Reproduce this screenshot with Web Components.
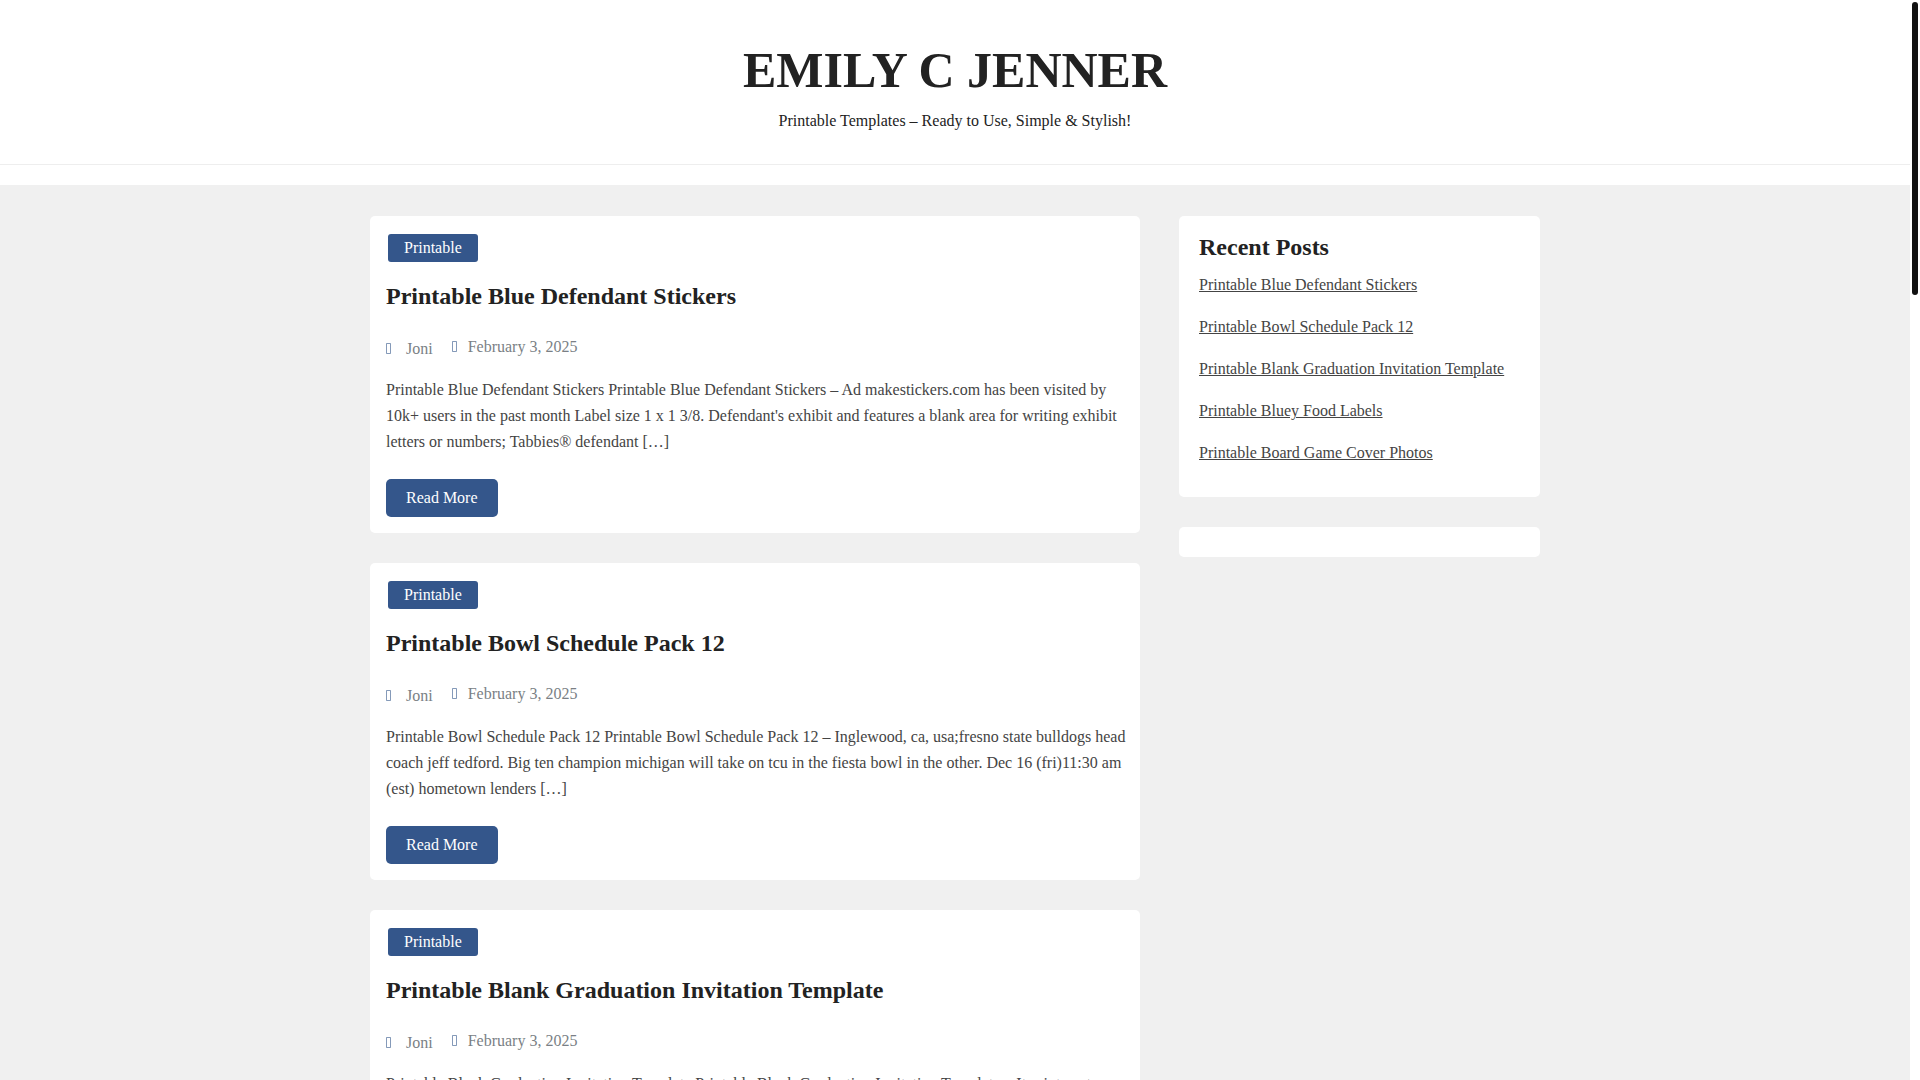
<!DOCTYPE html>
<html lang="en">
<head>
<meta charset="utf-8">
<meta name="viewport" content="width=device-width, initial-scale=1">
<title>EMILY C JENNER</title>
<style>
  html, body {
    margin: 0;
    height: 100%;
  }
  body {
    font-family: "Liberation Serif", "Times New Roman", serif;
    font-size: 16px;
    line-height: 26px;
    color: #444;
    background: #fff;
    --ink: #222;
    --brand: #34568b;
    --muted: #7a7f85;
    --page: #f0f0f0;
  }
</style>
</head>
<body>

<blog-shell>
  <site-header name="EMILY C JENNER" tagline="Printable Templates – Ready to Use, Simple &amp; Stylish!"></site-header>

  <blog-layout>
    <post-card category="Printable" heading="Printable Blue Defendant Stickers" author="Joni" date="February 3, 2025">
      Printable Blue Defendant Stickers Printable Blue Defendant Stickers – Ad makestickers.com has been visited by 10k+ users in the past month Label size 1 x 1 3/8. Defendant's exhibit and features a blank area for writing exhibit letters or numbers; Tabbies® defendant […]
    </post-card>
    <post-card category="Printable" heading="Printable Bowl Schedule Pack 12" author="Joni" date="February 3, 2025">
      Printable Bowl Schedule Pack 12 Printable Bowl Schedule Pack 12 – Inglewood, ca, usa;fresno state bulldogs head coach jeff tedford. Big ten champion michigan will take on tcu in the fiesta bowl in the other. Dec 16 (fri)11:30 am (est) hometown lenders […]
    </post-card>
    <post-card category="Printable" heading="Printable Blank Graduation Invitation Template" author="Joni" date="February 3, 2025">
      Printable Blank Graduation Invitation Template Printable Blank Graduation Invitation Template – It prints out
    </post-card>

    <side-widget slot="sidebar" heading="Recent Posts">
      <recent-link>Printable Blue Defendant Stickers</recent-link>
      <recent-link>Printable Bowl Schedule Pack 12</recent-link>
      <recent-link>Printable Blank Graduation Invitation Template</recent-link>
      <recent-link>Printable Bluey Food Labels</recent-link>
      <recent-link>Printable Board Game Cover Photos</recent-link>
    </side-widget>
    <side-widget slot="sidebar"></side-widget>
  </blog-layout>
</blog-shell>

<script>
class BlogShell extends HTMLElement {
  constructor() {
    super();
    this.attachShadow({ mode: 'open' });
    this.shadowRoot.innerHTML = `
      <style>
        :host {
          display: flex;
          height: 100vh;
          overflow: hidden;
        }
        .scroller {
          flex: 1;
          min-width: 0;
          overflow-y: auto;
          scrollbar-width: none;
          background: var(--page);
        }
        .track {
          width: 6px;
          padding: 2px;
          background: #fff;
        }
        .thumb {
          height: 293px;
          border-radius: 3px;
          background: #111;
        }
      </style>
      <div class="scroller"><slot></slot></div>
      <div class="track" aria-hidden="true"><div class="thumb"></div></div>
    `;
  }
}

class SiteHeader extends HTMLElement {
  constructor() {
    super();
    this.attachShadow({ mode: 'open' });
  }

  connectedCallback() {
    this.shadowRoot.innerHTML = `
      <style>
        :host {
          display: block;
          background: #fff;
          color: var(--ink);
          text-align: center;
        }
        header {
          padding: 40px 16px 30px;
          border-bottom: 1px solid #eee;
        }
        h1 {
          margin: 0 0 8px;
          font-size: 50px;
          line-height: 60px;
        }
        h1 a {
          color: inherit;
          text-decoration: none;
        }
        p {
          margin: 0;
        }
        nav {
          height: 20px;
        }
      </style>
      <header>
        <h1><a href="#">${this.getAttribute('name')}</a></h1>
        <p>${this.getAttribute('tagline').replace('&', '&amp;')}</p>
      </header>
      <nav></nav>
    `;
  }
}

class BlogLayout extends HTMLElement {
  constructor() {
    super();
    this.attachShadow({ mode: 'open' });
    this.shadowRoot.innerHTML = `
      <style>
        :host {
          display: block;
          padding: 31px 16px;
        }
        .container {
          display: grid;
          grid-template-columns: minmax(0, 770fr) minmax(0, 361fr);
          gap: 39px;
          max-width: 1170px;
          margin: 0 auto;
        }
        main, aside {
          display: flex;
          flex-direction: column;
          gap: 30px;
        }
        @media (max-width: 800px) {
          .container { grid-template-columns: minmax(0, 1fr); }
        }
      </style>
      <div class="container">
        <main><slot></slot></main>
        <aside><slot name="sidebar"></slot></aside>
      </div>
    `;
  }
}

class PostCard extends HTMLElement {
  constructor() {
    super();
    this.attachShadow({ mode: 'open' });
  }

  connectedCallback() {
    const category = this.getAttribute('category');
    const heading = this.getAttribute('heading');
    const author = this.getAttribute('author');
    const date = this.getAttribute('date');

    this.shadowRoot.innerHTML = `
      <style>
        :host {
          display: block;
          padding: 16px 8px 16px 16px;
          border-radius: 5px;
          background: #fff;
        }
        a {
          color: inherit;
          text-decoration: none;
        }
        .category {
          display: block;
          width: fit-content;
          margin: 2px;
          padding: 0 16px;
          border-radius: 3px;
          line-height: 28px;
          background: var(--brand);
          color: #fff;
        }
        h2 {
          margin: 17px 0;
          font-size: 24px;
          line-height: 34px;
          color: var(--ink);
        }
        .meta {
          display: flex;
          align-items: flex-start;
          gap: 19px;
          padding: 4px 0 13px;
          color: var(--muted);
        }
        .meta span {
          display: flex;
          align-items: center;
        }
        .author {
          gap: 15px;
          line-height: 30px;
        }
        .date {
          gap: 11px;
        }
        svg {
          width: 5px;
          height: 12px;
          fill: none;
          stroke: var(--brand);
          stroke-opacity: 0.6;
        }
        p {
          margin: 0 0 24px;
        }
        .more {
          display: block;
          width: fit-content;
          padding: 6px 20px;
          border-radius: 5px;
          background: var(--brand);
          color: #fff;
        }
      </style>
      <article>
        <a class="category" href="#">${category}</a>
        <h2><a href="#">${heading}</a></h2>
        <div class="meta">
          <span class="author"><svg viewBox="0 0 5 12" aria-hidden="true"><path d="M.5 .5h4v10h-4z"/></svg><a href="#">${author}</a></span>
          <span class="date"><svg viewBox="0 0 5 12" aria-hidden="true"><path d="M.5 .5h4v10h-4z"/></svg><time>${date}</time></span>
        </div>
        <p><slot></slot></p>
        <a class="more" href="#">Read More</a>
      </article>
    `;
  }
}

class SideWidget extends HTMLElement {
  constructor() {
    super();
    this.attachShadow({ mode: 'open' });
  }

  connectedCallback() {
    const heading = this.getAttribute('heading');

    this.shadowRoot.innerHTML = `
      <style>
        :host {
          display: block;
          padding: 15px 20px;
          border-radius: 5px;
          background: #fff;
        }
        h2 {
          margin: 0 0 9px;
          font-size: 24px;
          line-height: 32px;
          color: var(--ink);
        }
      </style>
      ${heading ? `<h2>${heading}</h2>` : ''}
      <div role="list"><slot></slot></div>
    `;
  }
}

class RecentLink extends HTMLElement {
  constructor() {
    super();
    this.attachShadow({ mode: 'open' });
  }

  connectedCallback() {
    this.setAttribute('role', 'listitem');
    this.shadowRoot.innerHTML = `
      <style>
        :host {
          display: block;
          padding-bottom: 16px;
        }
        a {
          color: inherit;
        }
      </style>
      <a href="#"><slot></slot></a>
    `;
  }
}

customElements.define('blog-shell', BlogShell);
customElements.define('site-header', SiteHeader);
customElements.define('blog-layout', BlogLayout);
customElements.define('post-card', PostCard);
customElements.define('side-widget', SideWidget);
customElements.define('recent-link', RecentLink);
</script>
</body>
</html>
